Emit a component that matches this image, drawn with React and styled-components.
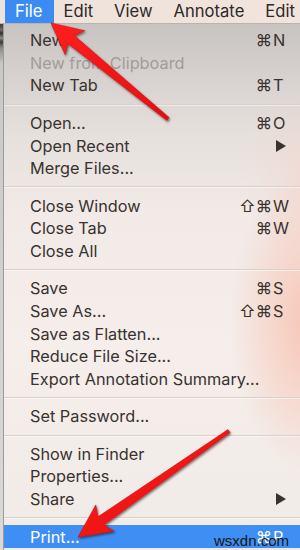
import React from "react";
import styled, { createGlobalStyle } from "styled-components";

const GlobalStyle = createGlobalStyle`
  html, body { margin: 0; padding: 0; background: #fff; }
  body { font-family: Inter, "Liberation Sans", Arial, sans-serif; overflow: hidden; }
`;

const Frame = styled.div`
  position: relative;
  width: 300px;
  height: 550px;
  overflow: hidden;
  display: flex;
  flex-direction: column;
`;

const MenuBar = styled.div`
  height: 24px;
  flex: none;
  display: flex;
  padding-left: 5px;
  background: linear-gradient(90deg, #eee2db, #f2e4dc);
  border-bottom: 1px solid #b9b4b1;
  box-sizing: border-box;
`;

const MenuTitle = styled.div`
  padding: 0 11px 0 10px;
  font-size: 16.6px;
  line-height: 23px;
  white-space: nowrap;
  color: ${(p) => (p.$active ? "#fff" : "#2c2928")};
  background: ${(p) => (p.$active ? "#3b8bf2" : "transparent")};
`;

const Body = styled.div`
  flex: 1;
  display: flex;
  min-height: 0;
`;

const WindowEdge = styled.div`
  width: 3px;
  flex: none;
  border-right: 1px solid #9d9a98;
  background: linear-gradient(
    180deg,
    #3b3b3b 0px,
    #6d6d6d 6px,
    #2f2f2f 9px,
    #8a8a8a 14px,
    #3a3a3a 18px,
    #8c8c8c 24px,
    #c9c9c9 40px,
    #d9d9d9 100%
  );
`;

const Dropdown = styled.div`
  flex: 1;
  padding-top: 5px;
  display: flex;
  flex-direction: column;
  background:
    radial-gradient(ellipse 80px 150px at 305px 300px, rgba(248, 190, 172, 0.85), rgba(248, 190, 172, 0)),
    radial-gradient(ellipse 60px 90px at 300px 150px, rgba(248, 205, 192, 0.4), rgba(248, 205, 192, 0)),
    linear-gradient(180deg, #c8c4c1 0px, #d6d1ce 50px, #e6e0dd 110px, #f1eae7 190px, #f5eeea 320px, #f1ebe8 100%);
`;

const Item = styled.div`
  height: 22.55px;
  flex: none;
  display: flex;
  align-items: center;
  padding-left: 26px;
  padding-right: 10px;
  font-size: 16.3px;
  color: ${(p) => (p.$disabled ? "#a29c98" : p.$selected ? "#fff" : "#38332f")};
  background: ${(p) => (p.$selected ? "#3f8ef3" : "transparent")};
  white-space: nowrap;
`;

const Label = styled.span`
  flex: 1;
`;

const Shortcut = styled.span`
  display: flex;
  align-items: center;
`;

const Mods = styled.span`
  text-align: right;
  padding-right: 1px;
`;

const Key = styled.span`
  width: 17px;
  display: flex;
  align-items: center;
`;

const Separator = styled.div`
  height: 1px;
  flex: none;
  margin: 7px 0 7.1px;
  background: #d7d1ce;
  box-shadow: 0 1px 0 rgba(255, 255, 255, 0.5);
`;

const Overlay = styled.svg`
  position: absolute;
  left: 0;
  top: 0;
  width: 300px;
  height: 550px;
  pointer-events: none;
`;

const Watermark = styled.span`
  position: absolute;
  right: 11px;
  bottom: 2px;
  font-family: "Liberation Sans", Arial, sans-serif;
  font-size: 15px;
  line-height: 15px;
  color: #151515;
`;

const SubArrow = () => (
  <svg width="11" height="12" viewBox="0 0 11 12" style={{ marginLeft: 3 }}>
    <path d="M0 0 L10 6 L0 12 Z" fill="currentColor" />
  </svg>
);

function arrowPoints(tail, tip, headLen, headHalf, wTail, wHead) {
  const dx = tip[0] - tail[0];
  const dy = tip[1] - tail[1];
  const len = Math.hypot(dx, dy);
  const ux = dx / len;
  const uy = dy / len;
  const px = -uy;
  const py = ux;
  const bx = tip[0] - ux * headLen;
  const by = tip[1] - uy * headLen;
  const pts = [
    [tail[0] + px * wTail / 2, tail[1] + py * wTail / 2],
    [bx + ux * 2 + px * wHead / 2, by + uy * 2 + py * wHead / 2],
    [bx - ux * 3 + px * headHalf, by - uy * 3 + py * headHalf],
    tip,
    [bx - ux * 3 - px * headHalf, by - uy * 3 - py * headHalf],
    [bx + ux * 2 - px * wHead / 2, by + uy * 2 - py * wHead / 2],
    [tail[0] - px * wTail / 2, tail[1] - py * wTail / 2],
  ];
  return pts.map((p) => `${p[0].toFixed(1)},${p[1].toFixed(1)}`).join(" ");
}

const groups = [
  [
    { label: "New", mods: "⌘", key: "N" },
    { label: "New from Clipboard", disabled: true },
    { label: "New Tab", mods: "⌘", key: "T" },
  ],
  [
    { label: "Open...", mods: "⌘", key: "O" },
    { label: "Open Recent", sub: true },
    { label: "Merge Files..." },
  ],
  [
    { label: "Close Window", mods: "⇧⌘", key: "W" },
    { label: "Close Tab", mods: "⌘", key: "W" },
    { label: "Close All" },
  ],
  [
    { label: "Save", mods: "⌘", key: "S" },
    { label: "Save As...", mods: "⇧⌘", key: "S" },
    { label: "Save as Flatten..." },
    { label: "Reduce File Size..." },
    { label: "Export Annotation Summary..." },
  ],
  [{ label: "Set Password..." }],
  [
    { label: "Show in Finder" },
    { label: "Properties..." },
    { label: "Share", sub: true },
  ],
  [{ label: "Print...", mods: "⌘", key: "P", selected: true }],
];

export default function App() {
  return (
    <Frame>
      <GlobalStyle />
      <MenuBar>
        <MenuTitle $active>File</MenuTitle>
        <MenuTitle>Edit</MenuTitle>
        <MenuTitle>View</MenuTitle>
        <MenuTitle>Annotate</MenuTitle>
        <MenuTitle>Edit</MenuTitle>
      </MenuBar>
      <Body>
        <WindowEdge />
        <Dropdown>
          {groups.map((g, gi) => (
            <React.Fragment key={gi}>
              {gi > 0 && <Separator />}
              {g.map((it) => (
                <Item key={it.label} $disabled={it.disabled} $selected={it.selected}>
                  <Label>{it.label}</Label>
                  {(it.key || it.sub) && (
                    <Shortcut>
                      <Mods>{it.mods || ""}</Mods>
                      <Key>{it.sub ? <SubArrow /> : it.key}</Key>
                    </Shortcut>
                  )}
                </Item>
              ))}
            </React.Fragment>
          ))}
        </Dropdown>
      </Body>
      <Overlay viewBox="0 0 300 550">
        <defs>
          <filter id="shadow" x="-20%" y="-20%" width="140%" height="140%">
            <feDropShadow dx="1" dy="1.5" stdDeviation="1.2" floodColor="#000" floodOpacity="0.55" />
          </filter>
          <linearGradient id="red" x1="0" y1="0" x2="1" y2="1">
            <stop offset="0" stopColor="#ff1f1f" />
            <stop offset="1" stopColor="#e30f12" />
          </linearGradient>
        </defs>
        <polygon
          points={arrowPoints([168, 119], [51, 23], 28, 15.5, 3.5, 10)}
          fill="url(#red)"
          stroke="#d10d10"
          strokeWidth="0.6"
          strokeLinejoin="round"
          filter="url(#shadow)"
        />
        <polygon
          points={arrowPoints([229, 431], [78, 537], 30, 16, 3.5, 10)}
          fill="url(#red)"
          stroke="#d10d10"
          strokeWidth="0.6"
          strokeLinejoin="round"
          filter="url(#shadow)"
        />
      </Overlay>
      <Watermark>wsxdn.com</Watermark>
    </Frame>
  );
}
